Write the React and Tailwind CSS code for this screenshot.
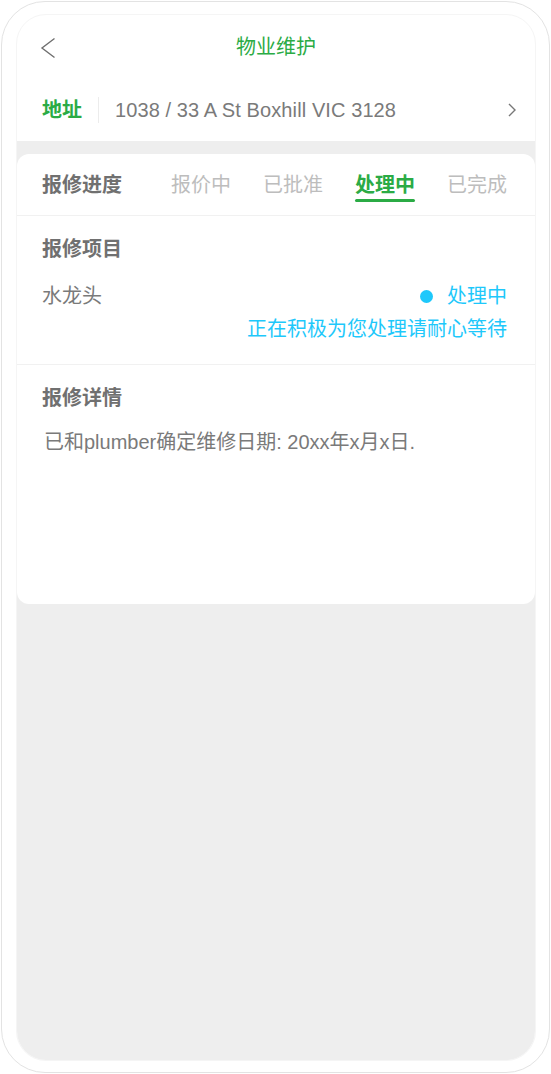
import { useState } from 'react';

const font = { fontFamily: '"Liberation Sans", "Noto Sans CJK SC", sans-serif' };

const steps = ['报价中', '已批准', '处理中', '已完成'];

export default function App() {
    const [active, setActive] = useState(2);

    return (
        <div className="w-[551px] h-[1074px] bg-white pt-px pl-px" style={font}>
            {/* phone frame */}
            <div className="w-[549px] h-[1072px] rounded-[44px] border border-[#e3e3e3] pt-[12px] pl-[14px] pr-[13px] pb-[11px]">
                <div className="h-full rounded-[30px] border border-[#f5f5f5] overflow-hidden flex flex-col bg-white">
                    {/* Header */}
                    <header className="h-[63px] shrink-0 flex items-center relative">
                        <button className="absolute left-[23px] top-[22px] w-[16px] h-[22px]">
                            <svg width="16" height="22" viewBox="0 0 16 22" fill="none">
                                <path d="M14.5 1.5 L2 11 L14.5 20.5" stroke="#6f6f6f" strokeWidth="1.4" />
                            </svg>
                        </button>
                        <h1 className="w-full text-center text-[20px] text-[#2bab45] leading-none">物业维护</h1>
                    </header>

                    {/* Address */}
                    <div className="h-[63px] shrink-0 flex items-center pl-[25px] pr-[18px]">
                        <span className="text-[20px] font-bold text-[#2bab45] leading-none">地址</span>
                        <div className="w-px h-[26px] bg-[#ececec] ml-[16px] mr-[16px]" />
                        <span className="text-[20px] text-[#7a7a7a] leading-none flex-1 tracking-[0.1px]">1038 / 33 A St Boxhill VIC 3128</span>
                        <svg width="10" height="14" viewBox="0 0 10 14" fill="none">
                            <path d="M2 1 L8 7 L2 13" stroke="#777" strokeWidth="1.4" />
                        </svg>
                    </div>

                    {/* Body */}
                    <div className="flex-1 bg-[#eeeeee] pt-[13px]">
                        <div className="bg-white rounded-[12px]">
                            {/* Progress tabs */}
                            <div className="h-[62px] flex items-center pl-[25px] pr-[28px] border-b border-[#f1f1f1]">
                                <span className="text-[20px] font-bold text-[#707070] leading-none">报修进度</span>
                                <div className="ml-auto flex gap-[32px]">
                                    {steps.map((s, i) => (
                                        <button key={s} onClick={() => setActive(i)}
                                            className={`relative text-[20px] leading-none ${i === active ? 'font-bold text-[#2bab45]' : 'text-[#bdbdbd]'}`}>
                                            {s}
                                            {i === active && <span className="absolute left-0 right-0 -bottom-[7px] h-[3px] rounded-full bg-[#2bab45]" />}
                                        </button>
                                    ))}
                                </div>
                            </div>

                            {/* Item */}
                            <div className="pl-[25px] pr-[28px] pt-[23px] pb-[25px] border-b border-[#f1f1f1]">
                                <h3 className="text-[20px] font-bold text-[#707070] leading-none">报修项目</h3>
                                <div className="flex items-start mt-[27px]">
                                    <span className="text-[20px] text-[#7a7a7a] leading-none">水龙头</span>
                                    <div className="ml-auto flex flex-col items-end">
                                        <div className="flex items-center leading-none">
                                            <span className="w-[13px] h-[13px] rounded-full bg-[#1ec8fb] mr-[14px]" />
                                            <span className="text-[20px] text-[#1ec8fb]">处理中</span>
                                        </div>
                                        <p className="text-[20px] text-[#1ec8fb] leading-none mt-[13px]">正在积极为您处理请耐心等待</p>
                                    </div>
                                </div>
                            </div>

                            {/* Details */}
                            <div className="pl-[25px] pr-[28px] pt-[23px] h-[239px]">
                                <h3 className="text-[20px] font-bold text-[#707070] leading-none">报修详情</h3>
                                <p className="text-[20px] text-[#7a7a7a] leading-none mt-[24px] pl-[2px]">已和plumber确定维修日期: 20xx年x月x日.</p>
                            </div>
                        </div>
                    </div>
                </div>
            </div>
        </div>
    );
}
